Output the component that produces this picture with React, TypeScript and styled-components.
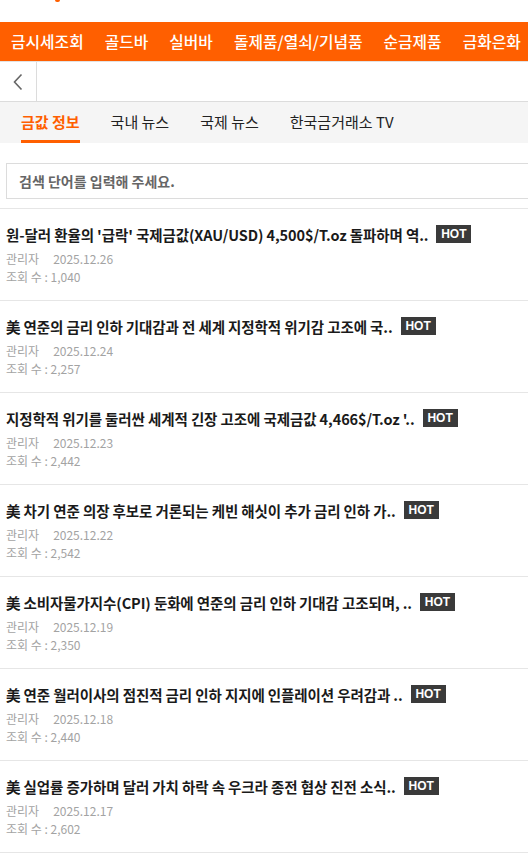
import React, { useState } from "react";
import styled, { createGlobalStyle } from "styled-components";

const GlobalStyle = createGlobalStyle`
  html, body {
    margin: 0;
    padding: 0;
    background: #fff;
    font-family: "Noto Sans CJK KR", "Noto Sans", sans-serif;
    overflow: hidden;
  }
  * { box-sizing: border-box; }
`;

const ORANGE = "#ff5f00";

const TopStrip = styled.div`
  height: 22px;
  position: relative;
  background: #fff;
`;

const LogoTip = styled.div`
  position: absolute;
  left: 55px;
  top: 0;
  width: 5px;
  height: 2px;
  background: ${ORANGE};
  border-radius: 0 0 2px 2px;
`;

const MainNav = styled.nav`
  height: 40px;
  background: ${ORANGE};
  border-bottom: 1px solid #e2e2e2;
  display: flex;
  align-items: center;
  gap: 21px;
  padding-left: 11px;
  white-space: nowrap;
  overflow: hidden;
`;

const NavItem = styled.a`
  color: #fff;
  font-size: 15.8px;
  font-weight: 500;
  text-decoration: none;
  flex-shrink: 0;
`;

const BackRow = styled.div`
  height: 40px;
  display: flex;
  border-bottom: 1px solid #dcdcdc;
`;

const BackButton = styled.button`
  width: 37px;
  height: 100%;
  border: none;
  border-right: 1px solid #dcdcdc;
  background: #fff;
  padding: 0;
  display: flex;
  align-items: center;
  justify-content: center;
  cursor: pointer;
`;

const TabBar = styled.div`
  height: 41px;
  background: #f5f5f5;
  display: flex;
  gap: 31px;
  padding-left: 21px;
`;

const Tab = styled.div<{ active?: boolean }>`
  height: 100%;
  display: flex;
  align-items: center;
  padding-top: 1px;
  font-size: 15px;
  font-weight: ${({ active }) => (active ? 700 : 400)};
  color: ${({ active }) => (active ? ORANGE : "#222")};
  border-bottom: 3px solid ${({ active }) => (active ? ORANGE : "transparent")};
  white-space: nowrap;
`;

const SearchArea = styled.div`
  padding: 20px 0 9px 6px;
  border-bottom: 1px solid #e6e6e6;
`;

const SearchInput = styled.input`
  width: 540px;
  height: 36px;
  border: 1px solid #dcdcdc;
  padding: 0 12px;
  font-family: inherit;
  font-size: 14px;
  font-weight: 700;
  outline: none;
  &::placeholder {
    color: #666;
  }
`;

const List = styled.ul`
  list-style: none;
  margin: 0;
  padding: 0;
`;

const Item = styled.li`
  padding: 14px 6px 14px;
  border-bottom: 1px solid #e6e6e6;
  height: 92px;
`;

const TitleRow = styled.div`
  display: flex;
  align-items: center;
  gap: 8px;
  height: 22px;
  white-space: nowrap;
`;

const Title = styled.a`
  font-size: 14.5px;
  font-weight: 700;
  color: #1a1a1a;
  text-decoration: none;
  letter-spacing: -0.1px;
`;

const HotBadge = styled.span`
  display: inline-flex;
  align-items: center;
  justify-content: center;
  width: 35px;
  height: 18px;
  background: #3a3a3a;
  color: #fff;
  font-family: "Liberation Sans", Arial, sans-serif;
  font-size: 12px;
  font-weight: 700;
`;

const Meta = styled.div`
  margin-top: 5px;
  font-size: 12px;
  line-height: 18px;
  color: #a3a3a3;
`;

const MetaLine = styled.div`
  display: flex;
  gap: 14px;
`;

const navItems = ["금시세조회", "골드바", "실버바", "돌제품/열쇠/기념품", "순금제품", "금화은화"];
const tabs = ["금값 정보", "국내 뉴스", "국제 뉴스", "한국금거래소 TV"];

const posts = [
  { title: "원-달러 환율의 '급락' 국제금값(XAU/USD) 4,500$/T.oz 돌파하며 역..", date: "2025.12.26", views: "1,040" },
  { title: "美 연준의 금리 인하 기대감과 전 세계 지정학적 위기감 고조에 국..", date: "2025.12.24", views: "2,257" },
  { title: "지정학적 위기를 둘러싼 세계적 긴장 고조에 국제금값 4,466$/T.oz '..", date: "2025.12.23", views: "2,442" },
  { title: "美 차기 연준 의장 후보로 거론되는 케빈 해싯이 추가 금리 인하 가..", date: "2025.12.22", views: "2,542" },
  { title: "美 소비자물가지수(CPI) 둔화에 연준의 금리 인하 기대감 고조되며, ..", date: "2025.12.19", views: "2,350" },
  { title: "美 연준 월러이사의 점진적 금리 인하 지지에 인플레이션 우려감과 ..", date: "2025.12.18", views: "2,440" },
  { title: "美 실업률 증가하며 달러 가치 하락 속 우크라 종전 협상 진전 소식..", date: "2025.12.17", views: "2,602" },
];

export default function App() {
  const [active, setActive] = useState(0);
  return (
    <>
      <GlobalStyle />
      <TopStrip>
        <LogoTip />
      </TopStrip>
      <MainNav>
        {navItems.map((n) => (
          <NavItem key={n}>{n}</NavItem>
        ))}
      </MainNav>
      <BackRow>
        <BackButton aria-label="back">
          <svg width="12" height="18" viewBox="0 0 12 18" fill="none">
            <path d="M9.5 1.5L2.5 9l7 7.5" stroke="#666" strokeWidth="1.6" />
          </svg>
        </BackButton>
      </BackRow>
      <TabBar>
        {tabs.map((t, i) => (
          <Tab key={t} active={i === active} onClick={() => setActive(i)}>
            {t}
          </Tab>
        ))}
      </TabBar>
      <SearchArea>
        <SearchInput placeholder="검색 단어를 입력해 주세요." />
      </SearchArea>
      <List>
        {posts.map((p) => (
          <Item key={p.date}>
            <TitleRow>
              <Title>{p.title}</Title>
              <HotBadge>HOT</HotBadge>
            </TitleRow>
            <Meta>
              <MetaLine>
                <span>관리자</span>
                <span>{p.date}</span>
              </MetaLine>
              <div>조회 수 : {p.views}</div>
            </Meta>
          </Item>
        ))}
      </List>
    </>
  );
}
